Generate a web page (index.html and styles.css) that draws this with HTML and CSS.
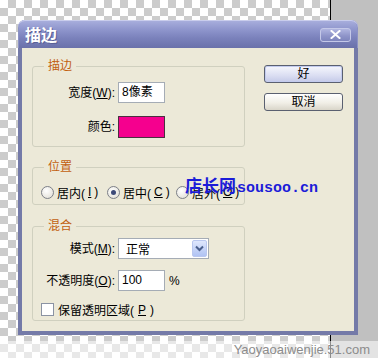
FILE: index.html
```html
<!DOCTYPE html>
<html>
<head>
<meta charset="utf-8">
<link rel="stylesheet" href="styles.css">
</head>
<body>
<div class="desk">
  <div class="canvas"></div>
  <div class="edge"></div>
  <div class="gray"></div>
</div>

<div class="dialog">
  <div class="titlebar">
    <span class="title">描边</span>
    <span class="close">
      <svg width="11" height="9" viewBox="0 0 11 9"><path d="M1.5 1 L9.5 8 M9.5 1 L1.5 8" stroke="#fff" stroke-width="2" stroke-linecap="square"/></svg>
    </span>
  </div>
  <div class="body">
    <div class="groups">
      <fieldset class="group">
        <legend>描边</legend>
        <div class="grid g1">
          <span class="label">宽度(<u>W</u>):</span>
          <span class="field w47">8像素</span>
          <span class="label">颜色:</span>
          <span class="swatch"></span>
        </div>
      </fieldset>

      <fieldset class="group g2">
        <legend>位置</legend>
        <div class="radios">
          <span class="opt o1"><span class="radio"></span>居内(<u>I</u>)</span>
          <span class="opt o2"><span class="radio on"></span>居中(<u>C</u>)</span>
          <span class="opt"><span class="radio"></span>居外(<u>O</u>)</span>
        </div>
      </fieldset>

      <fieldset class="group g3">
        <legend>混合</legend>
        <div class="grid g3grid">
          <span class="label">模式(<u>M</u>):</span>
          <span class="select"><span class="seltext">正常</span><span class="arrow"><svg width="9" height="7" viewBox="0 0 9 7"><path d="M1 1.5 L4.5 5 L8 1.5" fill="none" stroke="#4a5f8c" stroke-width="2"/></svg></span></span>
          <span class="label">不透明度(<u>O</u>):</span>
          <span class="pct"><span class="field w47">100</span><span>%</span></span>
          <span class="checkrow"><span class="check"></span>保留透明区域(<u>P</u>)</span>
        </div>
      </fieldset>
    </div>

    <div class="buttons">
      <span class="btn ok">好</span>
      <span class="btn cancel">取消</span>
    </div>
  </div>
</div>

<div class="watermark">店长网<span class="wm-latin">sousoo.cn</span></div>
<div class="credit">Yaoyaoaiwenjie.51.com</div>
</body>
</html>
```

FILE: styles.css
```css
html, body {
  margin: 0;
  padding: 0;
}
body {
  width: 378px;
  height: 358px;
  position: relative;
  overflow: hidden;
  font: 12px "Liberation Sans", "Noto Sans CJK SC", sans-serif;
  color: #000;
  text-autospace: no-autospace;
}
u {
  text-decoration: underline;
  text-underline-offset: 1px;
}

.desk {
  display: flex;
  height: 358px;
}
.canvas {
  width: 330px;
  background-color: #fff;
  background-image: conic-gradient(#cccccc 25%, #ffffff 0 50%, #cccccc 0 75%, #ffffff 0);
  background-size: 16px 16px;
}
.edge {
  width: 1px;
  background: #000;
}
.gray {
  flex: 1;
  background: #c0c0c0;
}

.dialog {
  position: absolute;
  left: 18px;
  top: 20px;
  width: 340px;
  height: 315px;
  display: flex;
  flex-direction: column;
}
.titlebar {
  height: 28px;
  flex: none;
  box-sizing: border-box;
  border-radius: 7px 7px 0 0;
  background: linear-gradient(#aab0de, #8e95cc 35%, #7a81bb 65%, #6a71aa);
  box-shadow: inset 0 1px 0 #c9cdec, inset 1px 0 0 #8c92c4, inset -1px 0 0 #8c92c4;
  display: flex;
  align-items: center;
  justify-content: space-between;
  padding: 0 7px 0 7px;
}
.title {
  color: #fff;
  font: bold 16px "Noto Sans CJK SC", sans-serif;
  line-height: 20px;
  text-shadow: 1px 1px 0 #5a6096;
}
.close {
  width: 31px;
  height: 14px;
  box-sizing: border-box;
  border: 1px solid #c4c8e8;
  border-radius: 3px;
  background: linear-gradient(#b0b5e0, #8d93c8 60%, #7e85bd);
  display: flex;
  align-items: center;
  justify-content: center;
  margin-top: 1px;
}

.body {
  flex: 1;
  border: 4px solid #747aa8;
  border-top: 0;
  background: #ece9d8;
  display: flex;
  gap: 19px;
  padding: 11px 0 0 10px;
}
.groups {
  width: 213px;
  display: flex;
  flex-direction: column;
}
.group {
  margin: 0;
  padding: 0;
  border: 1px solid #d0d0bf;
  border-radius: 3px;
  min-width: 0;
}
.group legend {
  margin-left: 11px;
  padding: 0 4px;
  color: #c2600f;
  line-height: 14px;
  font-size: 12px;
}
.g2 { margin-top: 13px; }
.g3 { margin-top: 14px; }

.grid {
  display: grid;
  grid-template-columns: 82px auto;
  column-gap: 3px;
  align-items: center;
  justify-items: start;
}
.g1 {
  row-gap: 13px;
  padding: 9px 0 8px;
}
.g3grid {
  row-gap: 11px;
  padding: 5px 0 3px;
}
.label {
  justify-self: end;
  line-height: 14px;
  white-space: nowrap;
}
.field {
  height: 21px;
  box-sizing: border-box;
  border: 1px solid #a5acb5;
  background: #fff;
  padding-left: 3px;
  line-height: 19px;
  display: block;
}
.w47 { width: 47px; }
.swatch {
  width: 47px;
  height: 22px;
  box-sizing: border-box;
  border: 1px solid #4a3040;
  background: #f5008e;
  display: block;
}

.radios {
  display: flex;
  align-items: center;
  height: 14px;
  padding: 11px 0 5px 8px;
}
.opt {
  display: flex;
  align-items: center;
  gap: 3px;
  white-space: nowrap;
}
.o1 { width: 66px; }
.o2 { width: 69px; }
.radio {
  width: 13px;
  height: 13px;
  box-sizing: border-box;
  border-radius: 50%;
  border: 1px solid #7d8088;
  background: radial-gradient(circle at 40% 35%, #ffffff, #e4e2da 80%);
  display: flex;
  align-items: center;
  justify-content: center;
}
.radio.on::after {
  content: "";
  width: 5px;
  height: 5px;
  border-radius: 50%;
  background: #3d4a78;
}

.select {
  width: 91px;
  height: 21px;
  box-sizing: border-box;
  border: 1px solid #a5acb5;
  background: #fff;
  display: flex;
  align-items: center;
  padding: 1px;
}
.seltext {
  flex: 1;
  padding-left: 6px;
}
.arrow {
  width: 15px;
  height: 17px;
  box-sizing: border-box;
  border: 1px solid #b9c7ef;
  border-radius: 2px;
  background: linear-gradient(#dfe7fd, #c2d1f7 60%, #b0c3f4);
  display: flex;
  align-items: center;
  justify-content: center;
}
.pct {
  display: flex;
  align-items: center;
  gap: 4px;
}
.checkrow {
  grid-column: 1 / 3;
  display: flex;
  align-items: center;
  gap: 4px;
  padding-left: 8px;
  height: 15px;
}
.check {
  width: 13px;
  height: 13px;
  box-sizing: border-box;
  border: 1px solid #8b93a3;
  background: #fff;
}

.buttons {
  display: flex;
  flex-direction: column;
  gap: 10px;
  padding-top: 6px;
}
.btn {
  width: 79px;
  height: 18px;
  box-sizing: border-box;
  border: 1px solid #5a6070;
  border-radius: 3px;
  display: flex;
  align-items: center;
  justify-content: center;
  font-size: 12px;
  line-height: 14px;
}
.ok {
  background: linear-gradient(#f6f7fd, #dde0f3 55%, #c5cae8);
  box-shadow: inset 0 0 0 1px #c3cbee;
}
.cancel {
  background: linear-gradient(#ffffff, #f1efe7 55%, #d9d5c9);
}

.watermark {
  position: absolute;
  left: 185px;
  top: 174px;
  color: #1c1cd8;
  font: bold 17px "Noto Sans CJK SC", sans-serif;
  line-height: 22px;
  white-space: nowrap;
}
.wm-latin {
  font: bold 15px "Liberation Mono", monospace;
  margin-left: 1px;
}

.credit {
  position: absolute;
  left: 0;
  top: 341px;
  width: 378px;
  height: 17px;
  box-sizing: border-box;
  padding-right: 8px;
  background: rgba(255, 255, 255, 0.55);
  color: #8c8c8c;
  font: 13px "Liberation Sans", sans-serif;
  line-height: 17px;
  text-align: right;
}
```
